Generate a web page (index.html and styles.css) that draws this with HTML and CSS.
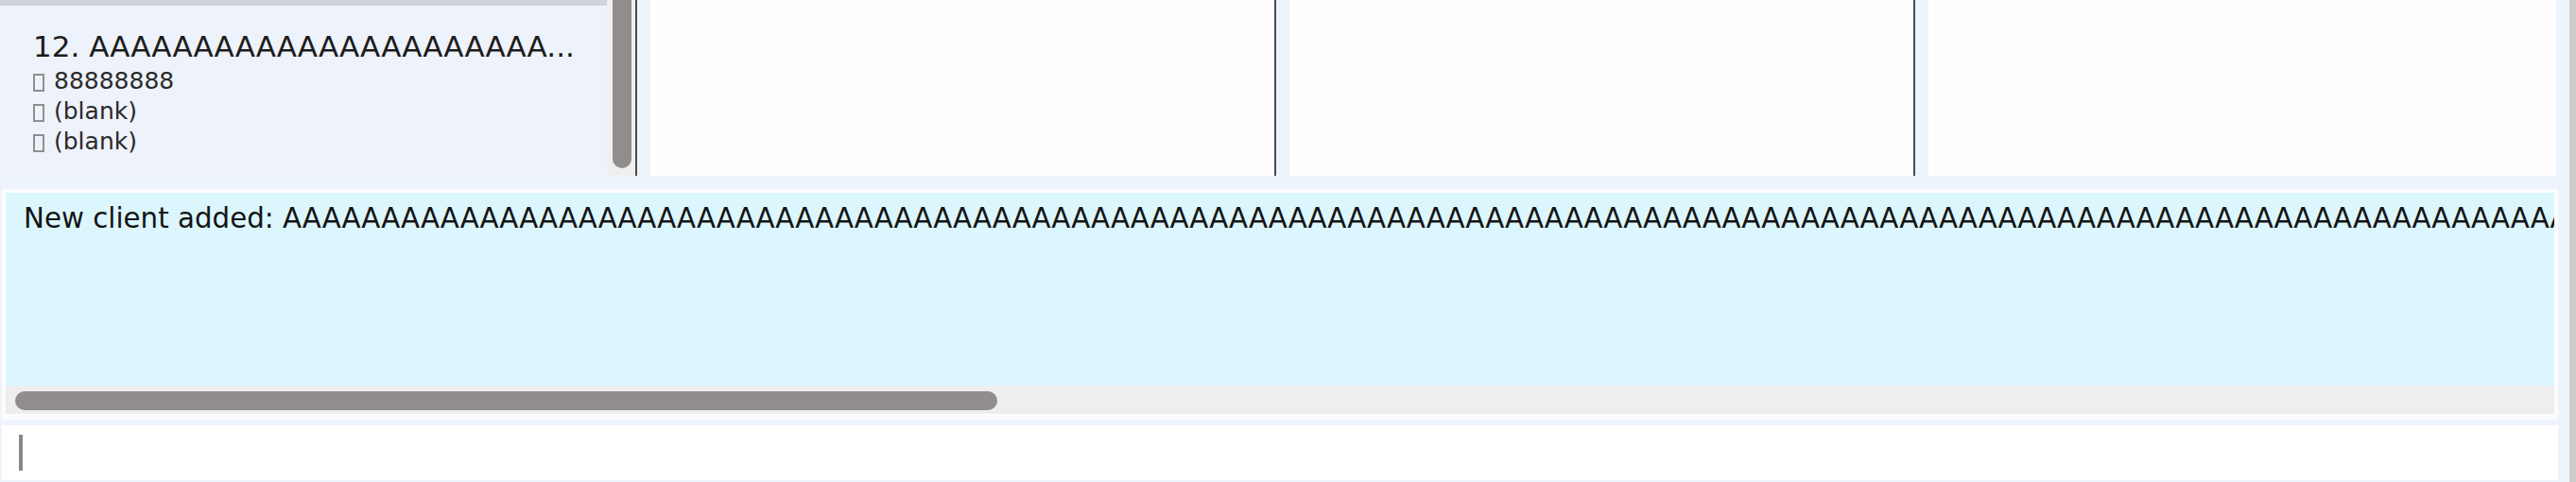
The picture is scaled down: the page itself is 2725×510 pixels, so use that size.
FILE: index.html
```html
<!DOCTYPE html>
<html lang="en">
<head>
<meta charset="utf-8">
<title>Address Book</title>
<link rel="stylesheet" href="styles.css">
</head>
<body>
<div class="window">
  <div class="content">
    <div class="top">
      <div class="list">
        <div class="list-viewport">
          <div class="card-prev"></div>
          <div class="card">
            <div class="card-title">12. AAAAAAAAAAAAAAAAAAAAAA...</div>
            <div class="card-line"><span class="tofu"></span>88888888</div>
            <div class="card-line"><span class="tofu"></span>(blank)</div>
            <div class="card-line"><span class="tofu"></span>(blank)</div>
          </div>
        </div>
        <div class="vscroll"><div class="vthumb"></div></div>
      </div>
      <div class="panel"></div>
      <div class="panel"></div>
      <div class="panel panel-last"></div>
    </div>
    <div class="result">
      <div class="result-text">New client added: AAAAAAAAAAAAAAAAAAAAAAAAAAAAAAAAAAAAAAAAAAAAAAAAAAAAAAAAAAAAAAAAAAAAAAAAAAAAAAAAAAAAAAAAAAAAAAAAAAAAAAAAAAAAAAAAAAAAAAAAAAAAAAAAAAAAAAAAAAAAAAAAAAAAAAAAAAAAAAAAAAAAAAAAAAAA</div>
      <div class="hscroll"><div class="hthumb"></div></div>
    </div>
    <div class="command"><span class="caret"></span></div>
  </div>
  <div class="strip"></div>
</div>
</body>
</html>
```

FILE: styles.css
```css
html, body {
  margin: 0;
  padding: 0;
}
body {
  background: #edf4fc;
  font-family: "DejaVu Sans", sans-serif;
  width: 2725px;
  height: 510px;
  overflow: hidden;
}
.window {
  display: flex;
  height: 510px;
}
.content {
  width: 2718px;
  display: flex;
  flex-direction: column;
}
.strip {
  width: 7px;
  background: #cccccc;
}
.top {
  display: flex;
  height: 186px;
}
.list {
  display: flex;
  width: 672px;
  border-right: 2px solid #4b4b4b;
}
.list-viewport {
  width: 642px;
  display: flex;
  flex-direction: column;
  background: #edf4fc;
}
.card-prev {
  height: 6px;
  background: #cfd4da;
}
.card {
  height: 179px;
  background: #eef2fa;
  padding: 25px 0 0 32px;
  box-sizing: border-box;
  color: #1c1c1c;
}
.card-title {
  font-size: 31px;
  line-height: 36px;
  padding-left: 3px;
  white-space: nowrap;
}
.card-line {
  font-size: 25px;
  line-height: 32px;
  color: #2a2a2a;
  white-space: nowrap;
}
.card-title + .card-line {
  margin-top: 3px;
}
.tofu {
  display: inline-block;
  width: 12px;
  height: 19px;
  box-sizing: border-box;
  border: 2px solid #8f8f8f;
  margin: 0 10px 0 3px;
  vertical-align: -3px;
}
.vscroll {
  width: 30px;
  height: 186px;
  background: #efefef;
  padding: 0 4px 0 6px;
  box-sizing: border-box;
}
.vthumb {
  height: 178px;
  background: #918d8c;
  border-radius: 0 0 10px 10px;
}
.panel {
  margin-left: 14px;
  width: 660px;
  background: #fefefe;
  border-right: 2px solid #4b4b4b;
}
.panel-last {
  width: 664px;
  border-right: none;
}
.result {
  margin: 14px 0 0 2px;
  width: 2704px;
  height: 244px;
  box-sizing: border-box;
  padding: 4px 4px 6px 4px;
  background: #fafcfe;
  display: flex;
  flex-direction: column;
}
.result-text {
  height: 204px;
  background: #dcf6fd;
  box-sizing: border-box;
  padding: 10px 0 0 19px;
  font-size: 29.3px;
  color: #141414;
  white-space: nowrap;
  overflow: hidden;
}
.hscroll {
  height: 30px;
  background: #eeeeee;
  padding: 6px 0 0 10px;
  box-sizing: border-box;
}
.hthumb {
  width: 1039px;
  height: 20px;
  background: #918d8c;
  border-radius: 10px;
}
.command {
  margin: 6px 0 0 2px;
  width: 2704px;
  height: 58px;
  background: #ffffff;
  box-sizing: border-box;
  padding: 10px 0 0 18px;
}
.caret {
  display: block;
  width: 4px;
  height: 38px;
  background: #888888;
}
```
